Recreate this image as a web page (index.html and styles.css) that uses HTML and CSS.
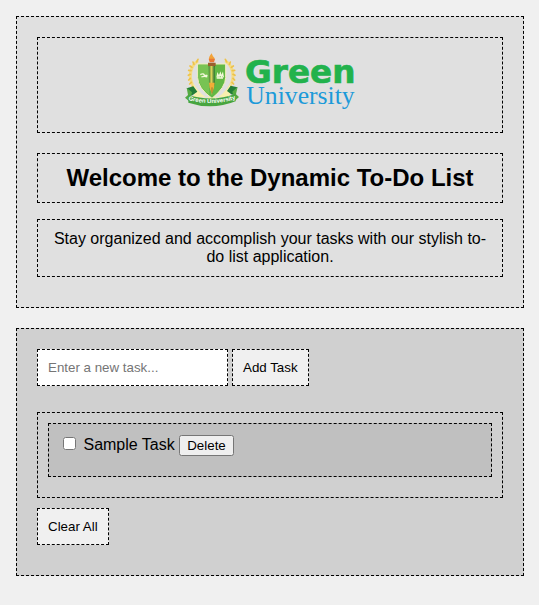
FILE: index.html
```html
<!DOCTYPE html>
<html lang="en">
<head>
  <meta charset="utf-8">
  <meta name="viewport" content="width=device-width, initial-scale=1">
  <title>Dynamic To-Do List</title>
  <link rel="stylesheet" href="styles.css">
</head>
<body>
  <header class="panel intro">
    <div class="box logo-box">
      <svg class="logo" viewBox="0 0 540 192" role="img" aria-label="Green University">
        <defs>
          <linearGradient id="pen" x1="0" y1="0" x2="1" y2="0">
            <stop offset="0" stop-color="#2e7c35"/>
            <stop offset=".45" stop-color="#e2d45a"/>
            <stop offset="1" stop-color="#246d31"/>
          </linearGradient>
          <path id="ribbon-line" d="M22 155Q96 177 170 152"/>
        </defs>
        <g fill="none" stroke="#f5dc84" stroke-width="9">
          <path d="M54 38Q30 54 31 87Q33 112 56 138"/>
          <path d="M136 38Q160 54 159 87Q157 112 134 138"/>
        </g>
        <g fill="none" stroke="#edc24b" stroke-width="5" stroke-linecap="round">
          <path d="M50 42l4-8M42 49l-3-7M36 58l-6-4M33 68l-7-1M31 79l-6 3M31 91l-5 5M34 103l-5 5M39 115l-5 6"/>
          <path d="M140 42l-4-8M148 49l3-7M154 58l6-4M157 68l7-1M159 79l6 3M159 91l5 5M156 103l5 5M151 115l5 6"/>
        </g>
        <path fill="#f8efad" d="M40 106Q60 142 96 158Q132 142 152 106L150 148H42Z"/>
        <path fill="#62b845" stroke="#f5f0bc" stroke-width="3" d="M53 48H137V88Q137 118 96 151Q53 120 53 88Z"/>
        <path fill="#78c353" d="M56 51H87V140Q56 116 56 88Z"/>
        <g fill="none" stroke="#f2f8da" stroke-width="4">
          <path d="M61 80q8-5 12 1q5 4 9 0M64 87q9-4 18 0M70 77l5 9"/>
          <path d="M111 88l2-10 4 8 4-10 3 10 4-9 2 11M110 90h19"/>
        </g>
        <path fill="#f2a33a" d="M95 16Q84 28 88 36Q92 42 96 42Q106 37 103 29Q98 26 95 16Z"/>
        <path fill="#e87835" d="M86 32h19l-3 11H89Z"/>
        <path fill="#9b602f" d="M84 44h23v8l-4 6H88l-4-6Z"/>
        <path fill="url(#pen)" d="M86 54h18v54l-8 34-9-34Z"/>
        <path fill="#f2ad37" d="M87 104h17l-2 15-6 18-7-18Z"/>
        <path stroke="#5a642b" stroke-width="2" d="M96 118v18"/>
        <path fill="#237d39" d="M20 121l20-6 12 16-17 12ZM172 118l-20-5-11 16 16 12Z"/>
        <path fill="#55aa42" d="M20 119l16 14-7 28-14-12 9-8ZM173 116l-16 15 7 28 13-12-9-8Z"/>
        <path fill="#47a53f" d="M25 140Q96 164 167 137V160Q96 188 25 164Z"/>
        <text class="ribbon-text"><textPath href="#ribbon-line" startOffset="50%">Green University</textPath></text>
        <text class="logo-green" x="195" y="106">Green</text>
        <text class="logo-university" x="199" y="168">University</text>
      </svg>
    </div>
    <h1 class="box title">Welcome to the Dynamic To-Do List</h1>
    <p class="box description">Stay organized and accomplish your tasks with our stylish to-do list application.</p>
  </header>

  <main class="panel tasks">
    <form class="task-form">
      <input class="field" type="text" placeholder="Enter a new task..." aria-label="New task">
      <button class="action" type="button">Add Task</button>
    </form>
    <ul class="box task-list">
      <li class="box task">
        <input type="checkbox" id="sample-task">
        <label for="sample-task">Sample Task</label>
        <button type="button">Delete</button>
      </li>
    </ul>
    <button class="action" type="button">Clear All</button>
  </main>
</body>
</html>
```
FILE: styles.css
```css
* {
  box-sizing: border-box;
}

body {
  margin: 16px 15px 16px 16px;
  background: #f0f0f0;
  color: #000;
  font: 16px "Liberation Sans", Arial, sans-serif;
}

.panel {
  margin-bottom: 20px;
  padding: 20px 20px 30px;
  border: 1px dashed #000;
}

.intro {
  background: #e0e0e0;
  text-align: center;
}

.tasks {
  background: #d0d0d0;
}

.box {
  padding: 10px;
  border: 1px dashed #000;
}

.logo-box {
  height: 96px;
  margin-bottom: 20px;
}

.logo {
  display: block;
  width: 180px;
  height: 64px;
  margin: 0 auto;
}

.logo-green {
  font: bold 98px "DejaVu Sans", sans-serif;
  fill: #22b24c;
  stroke: #22b24c;
  stroke-width: 2px;
}

.logo-university {
  font: 77px "Liberation Serif", serif;
  fill: #1c9ad9;
}

.ribbon-text {
  font: bold 18px "Liberation Sans", sans-serif;
  fill: #fff;
  text-anchor: middle;
}

.title {
  margin: 0 0 16px;
  font-size: 24px;
  line-height: 28px;
}

.description {
  margin: 0;
  line-height: 18px;
}

.task-form {
  display: flex;
  gap: 4px;
  margin-bottom: 26px;
}

button,
.field {
  font-family: "Liberation Sans", Arial, sans-serif;
}

.field,
.action {
  height: 37px;
  padding: 10px;
  border: 1px dashed #000;
}

.field {
  width: 191px;
}

.action {
  background: #f0f0f0;
}

.task-list {
  margin: 0 0 10px;
  padding-bottom: 20px;
  list-style: none;
}

.task {
  padding-bottom: 20px;
  background: #c0c0c0;
}
```
